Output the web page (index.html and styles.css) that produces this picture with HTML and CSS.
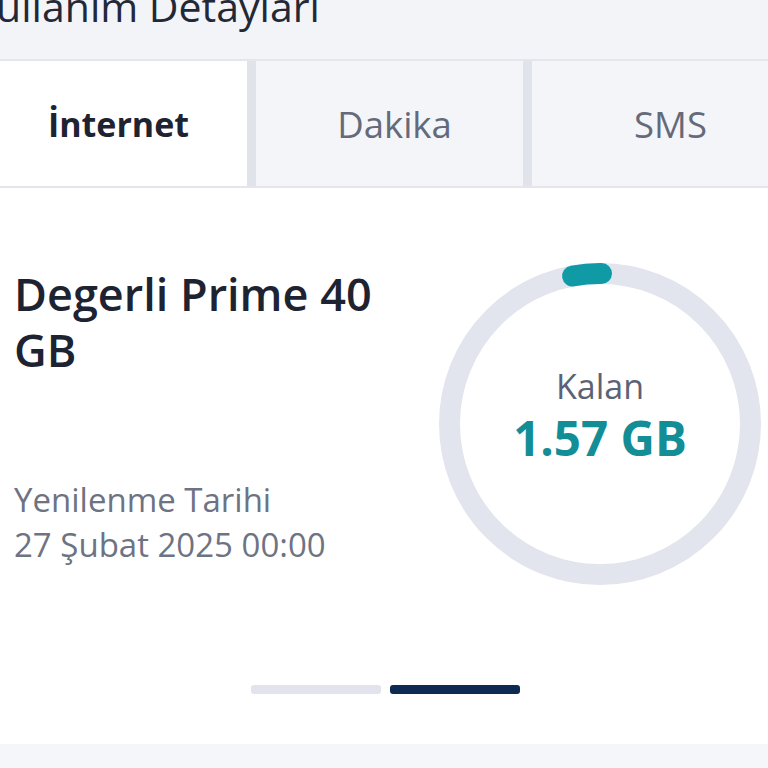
FILE: index.html
```html
<!DOCTYPE html>
<html lang="tr">
<head>
    <meta charset="UTF-8">
    <title>Kullanım Detayları</title>
    <link rel="stylesheet" href="styles.css">
</head>
<body>
<div class="header">
    <h1 class="page-title">Kullanım Detayları</h1>
</div>
<div class="tabs">
    <a href="#" class="tab active">İnternet</a>
    <a href="#" class="tab">Dakika</a>
    <a href="#" class="tab">SMS</a>
</div>
<div class="card">
    <div class="usage">
        <div class="plan">
            <h2 class="plan-name">Degerli Prime 40 GB</h2>
            <p class="renew-label">Yenilenme Tarihi</p>
            <p class="renew-date">27 Şubat 2025 00:00</p>
        </div>
        <div class="ring">
            <svg class="ring-svg" width="324" height="324" viewBox="0 0 324 324">
                <circle cx="162" cy="162" r="150.5" fill="none" stroke="#e2e5ed" stroke-width="21"/>
                <path d="M 163.5 11.5 A 150.5 150.5 0 0 0 134.6 14.0" fill="none" stroke="#0f9aa6" stroke-width="21" stroke-linecap="round"/>
            </svg>
            <div class="ring-text">
                <span class="ring-label">Kalan</span>
                <span class="ring-value">1.57 GB</span>
            </div>
        </div>
    </div>
    <div class="pager">
        <span class="pager-bar"></span>
        <span class="pager-bar current"></span>
    </div>
</div>
<div class="footer"></div>
</body>
</html>
```
FILE: styles.css
```css
body, h1, h2, p {
    margin: 0;
    padding: 0;
}

body {
    font-family: "Open Sans", "Noto Sans", sans-serif;
    color: #1e2332;
    background: #fff;
    width: 768px;
    height: 768px;
    overflow: hidden;
}

a {
    text-decoration: none;
}

.header {
    height: 59px;
    background: #f3f4f7;
    overflow: hidden;
}

.page-title {
    font-size: 41px;
    font-weight: 400;
    line-height: 40px;
    color: #232838;
    margin: -14px 0 0 -29px;
    white-space: nowrap;
}

.tabs {
    display: flex;
    gap: 9px;
    width: 819px;
    margin-left: -20px;
    background: #e1e3ea;
    border-top: 2px solid #e4e6ec;
    border-bottom: 2px solid #e4e6ec;
}

.tab {
    flex: 0 0 267px;
    height: 125px;
    padding-left: 10px;
    box-sizing: border-box;
    display: flex;
    align-items: center;
    justify-content: center;
    background: #f4f5f9;
    font-size: 36.5px;
    color: #646a7a;
}

.tab.active {
    background: #fff;
    color: #1e2332;
    font-size: 34px;
    font-weight: 700;
}

.card {
    height: 556px;
    background: #fff;
    padding: 74px 6px 0 14px;
    box-sizing: border-box;
}

.usage {
    display: flex;
    justify-content: space-between;
}

.plan {
    width: 400px;
    padding-top: 4px;
}

.plan-name {
    font-size: 45px;
    font-weight: 600;
    line-height: 56px;
    color: #1e2332;
}

.renew-label {
    margin-top: 99px;
    font-size: 33px;
    line-height: 45px;
    color: #6e7383;
}

.renew-date {
    font-size: 33px;
    line-height: 45px;
    color: #6e7383;
}

.ring {
    position: relative;
    width: 324px;
    height: 324px;
    display: flex;
    align-items: center;
    justify-content: center;
}

.ring-svg {
    position: absolute;
    top: 0;
    left: 0;
}

.ring-text {
    display: flex;
    flex-direction: column;
    align-items: center;
    padding-bottom: 16px;
}

.ring-label {
    font-size: 34px;
    line-height: 44px;
    color: #5c6275;
}

.ring-value {
    font-size: 47.5px;
    font-weight: 700;
    line-height: 60px;
    color: #138d96;
}

.pager {
    display: flex;
    justify-content: center;
    gap: 9px;
    margin-top: 99px;
    padding-right: 6px;
}

.pager-bar {
    width: 130px;
    height: 9px;
    border-radius: 3px;
    background: #e2e3ec;
}

.pager-bar.current {
    background: #0c2a52;
}

.footer {
    height: 30px;
    background: #f5f6f9;
}
```
